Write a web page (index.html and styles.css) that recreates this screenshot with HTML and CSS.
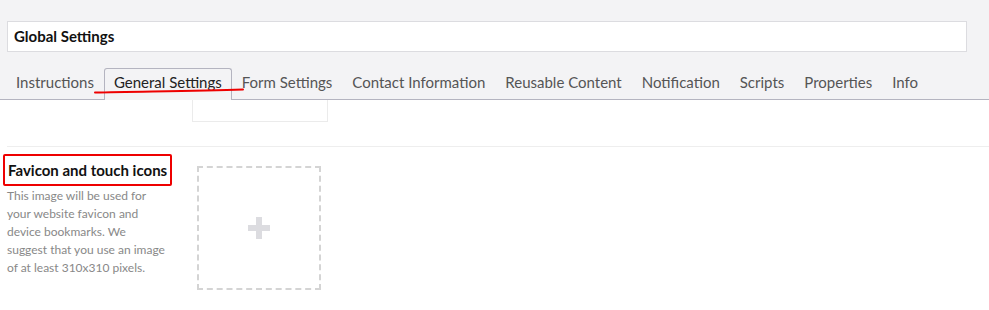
FILE: index.html
```html
<!DOCTYPE html>
<html lang="en">
<head>
    <meta charset="UTF-8">
    <title>Global Settings</title>
    <link rel="stylesheet" href="styles.css">
</head>
<body>
    <div class="header">
        <div class="title-input">Global Settings</div>
        <ul class="tabs">
            <li>Instructions</li>
            <li class="active">General Settings</li>
            <li>Form Settings</li>
            <li>Contact Information</li>
            <li>Reusable Content</li>
            <li>Notification</li>
            <li>Scripts</li>
            <li>Properties</li>
            <li>Info</li>
        </ul>
        <svg class="scribble" width="160" height="12" viewBox="0 0 160 12">
            <path d="M1 7.5 C 40 6.5, 100 6, 149 4.5" stroke="#ee0000" stroke-width="2" fill="none" stroke-linecap="round"/>
        </svg>
    </div>

    <div class="content">
        <div class="leftover"></div>
        <div class="field-row">
            <div class="field-info">
                <h3 class="field-title">Favicon and touch icons</h3>
                <p class="field-desc">This image will be used for your website favicon and device bookmarks. We suggest that you use an image of at least 310x310 pixels.</p>
            </div>
            <div class="upload-box">
                <span class="plus"></span>
            </div>
        </div>
    </div>
</body>
</html>
```

FILE: styles.css
```css
body {
    margin: 0;
    font-family: Lato, "Open Sans", sans-serif;
    background-color: white;
}
.header {
    position: relative;
    background-color: #f3f3f5;
    padding-top: 21px;
    border-bottom: 1px solid #b4b4c0;
}
.title-input {
    margin: 0 22px 0 7px;
    height: 29px;
    background: white;
    border: 1px solid #dcdce0;
    font-weight: bold;
    font-size: 15px;
    line-height: 28px;
    padding-left: 6px;
    color: #111;
}
.tabs {
    list-style-type: none;
    display: flex;
    margin: 16px 0 0 0;
    padding: 0 0 0 6px;
}
.tabs li {
    font-size: 15px;
    color: #555;
    padding: 0 9px;
    height: 30px;
    line-height: 27px;
    border: 1px solid transparent;
    border-bottom: none;
    margin-bottom: -1px;
    border-radius: 3px 3px 0 0;
}
.tabs li.active {
    background: #f3f3f5;
    border-color: #b4b4c0;
    color: #222;
    height: 31px;
}
.scribble {
    position: absolute;
    left: 94px;
    top: 85px;
}
.content {
    padding: 0 0 0 7px;
}
.leftover {
    margin-left: 185px;
    width: 134px;
    height: 21px;
    border: 1px solid #ebebeb;
    border-top: none;
}
.field-row {
    display: flex;
    border-top: 1px solid #eeeeee;
    margin-top: 24px;
    padding-top: 7px;
}
.field-info {
    width: 170px;
    margin-left: -4px;
}
.field-title {
    display: inline-block;
    margin: 0;
    font-size: 15px;
    font-weight: bold;
    color: #111;
    border: 2px solid #ee0000;
    border-radius: 2px;
    padding: 6px 3px 5px 3px;
    line-height: 17px;
}
.field-desc {
    margin: 1px 0 0 4px;
    font-size: 12px;
    line-height: 18px;
    color: #888;
    width: 159px;
}
.upload-box {
    margin-left: 24px;
    margin-top: 12px;
    width: 120px;
    height: 120px;
    border: 2px dashed #d4d4d4;
    display: flex;
    align-items: center;
    justify-content: center;
}
.plus {
    position: relative;
    width: 22px;
    height: 6px;
    background: #dcdce0;
}
.plus::after {
    content: "";
    position: absolute;
    left: 8px;
    top: -8px;
    width: 6px;
    height: 22px;
    background: #dcdce0;
}
```
